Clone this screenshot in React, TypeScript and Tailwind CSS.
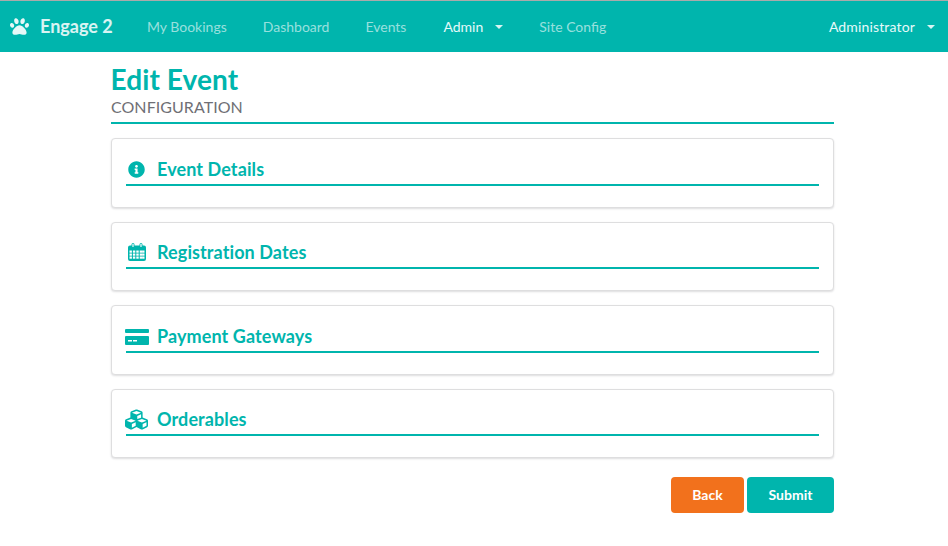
import { FaPaw, FaInfoCircle, FaCubes } from "react-icons/fa";
import type { ReactNode } from "react";

function CalendarIcon() {
  const xs = [1.5, 4.9, 8.3, 11.7, 14.1];
  const ys = [7.5, 10.5, 13.5];
  return (
    <svg viewBox="0 0 18 18" className="mb-[2px] ml-[2px] h-[18px] w-[18px]" fill="currentColor">
      <path d="M0 4.5a2 2 0 0 1 2-2h1.5v-1a1.5 1.5 0 0 1 3 0v1h5v-1a1.5 1.5 0 0 1 3 0v1H16a2 2 0 0 1 2 2V16a2 2 0 0 1-2 2H2a2 2 0 0 1-2-2z" />
      <rect x="4.4" y="0.8" width="1.2" height="3.2" rx="0.6" fill="white" />
      <rect x="12.4" y="0.8" width="1.2" height="3.2" rx="0.6" fill="white" />
      {ys.map((y) =>
        xs.map((x) => <rect key={`${x}-${y}`} x={x} y={y} width="2.4" height="2.2" fill="white" />),
      )}
    </svg>
  );
}

function CardIcon() {
  return (
    <svg viewBox="0 0 24 16" className="mt-[2px] -ml-[1px] h-[16px] w-[24px]" fill="currentColor">
      <rect x="0" y="0" width="24" height="4" rx="1" />
      <rect x="0" y="7" width="24" height="9" rx="1" />
      <rect x="3" y="11" width="4" height="1.5" fill="white" />
      <rect x="8" y="11" width="4" height="1.5" fill="white" />
    </svg>
  );
}

const SECTIONS: { title: string; icon: ReactNode }[] = [
  { title: "Event Details", icon: <FaInfoCircle className="ml-[2px] h-[17px] w-[17px]" /> },
  { title: "Registration Dates", icon: <CalendarIcon /> },
  { title: "Payment Gateways", icon: <CardIcon /> },
  { title: "Orderables", icon: <FaCubes className="-ml-[1px] h-[23px] w-[23px]" /> },
];

function NavLink({ label, active }: { label: string; active?: boolean }) {
  return (
    <a className={`text-[14px] ${active ? "text-[#e6fafa]" : "text-white/60"}`}>{label}</a>
  );
}

function Caret() {
  return <span className="ml-[12px] h-0 w-0 border-x-[4px] border-t-[4px] border-x-transparent border-t-white/85" />;
}

export default function App() {
  return (
    <div className="min-h-[546px] bg-white font-['Lato',sans-serif] text-[14px]">
      {/* Top menu */}
      <nav className="flex h-[52px] items-center border-t border-[#aaaaaa] bg-[#00b5ad] pr-[13px] pl-[10px]">
        <FaPaw className="h-[19px] w-[19px] text-white/90" />
        <span className="ml-[11px] w-[107px] text-[18px] font-bold text-white/85">Engage 2</span>
        <div className="flex items-center gap-[36px]">
          <NavLink label="My Bookings" />
          <NavLink label="Dashboard" />
          <NavLink label="Events" />
          <div className="ml-[1px] flex items-center">
            <NavLink label="Admin" active />
            <Caret />
          </div>
          <NavLink label="Site Config" />
        </div>
        <div className="ml-auto flex items-center tracking-[0.15px]">
          <NavLink label="Administrator" active />
          <Caret />
        </div>
      </nav>

      <main className="ml-[111px] w-[723px]">
        {/* Page heading */}
        <div className="border-b-2 border-[#00b5ad] pb-[6px]">
          <h1 className="-ml-[0.5px] pt-[9px] text-[28px] leading-[36px] font-bold tracking-[0.1px] text-[#00b5ad]">Edit Event</h1>
          <p className="mt-[1px] text-[16px] leading-[18px] tracking-[0.05px] text-[#6f6f75]">CONFIGURATION</p>
        </div>

        {/* Sections */}
        <div className="mt-[14px] flex flex-col gap-[14px]">
          {SECTIONS.map((s) => (
            <section
              key={s.title}
              className="h-[69.5px] rounded-[4px] border border-[#dededf] bg-white px-[14px] pt-[17px] shadow-[0_1px_2px_0_rgba(34,36,38,0.15)]"
            >
              <div className="flex h-[29.5px] items-center border-b-2 border-[#00b5ad] pb-[1px] text-[#00b5ad]">
                <span className="flex w-[31px] shrink-0 items-center">{s.icon}</span>
                <h2 className="text-[18px] font-bold tracking-[0.1px]">{s.title}</h2>
              </div>
            </section>
          ))}
        </div>

        {/* Actions */}
        <div className="mt-[19px] flex justify-end gap-[3px]">
          <button className="h-[36px] w-[73px] rounded-[4px] bg-[#f2711c] pb-[2px] text-[14px] font-bold text-white">Back</button>
          <button className="h-[36px] w-[87px] rounded-[4px] bg-[#00b5ad] pb-[2px] text-[14px] font-bold text-white">Submit</button>
        </div>
      </main>
    </div>
  );
}
